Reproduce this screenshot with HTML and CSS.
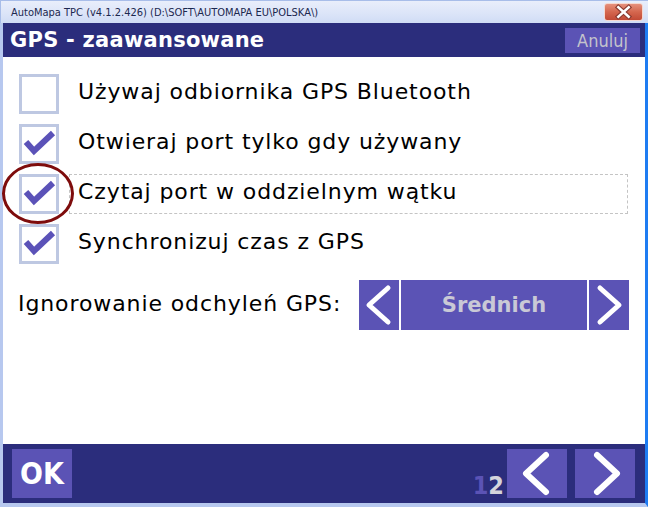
FILE: index.html
```html
<!DOCTYPE html>
<html lang="pl">
<head>
<meta charset="utf-8">
<title>AutoMapa TPC</title>
<link rel="stylesheet" href="styles.css">
</head>
<body>
<div class="win">
  <div class="titlebar">
    <span class="title">AutoMapa TPC (v4.1.2.426) (D:\SOFT\AUTOMAPA EU\POLSKA\)</span>
    <span class="close">
      <svg width="39" height="18" viewBox="0 0 39 18">
        <path d="M14 4 L25 14 M25 4 L14 14" stroke="#8a3a30" stroke-width="5" stroke-linecap="square" fill="none"/>
        <path d="M14 4 L25 14 M25 4 L14 14" stroke="#ffffff" stroke-width="2.6" stroke-linecap="square" fill="none"/>
      </svg>
    </span>
  </div>
  <div class="frame">
    <div class="hdr">
      <h1 class="hdr-title">GPS - zaawansowane</h1>
      <div class="cancel">Anuluj</div>
    </div>
    <div class="content">
      <div class="opt">
        <span class="box"></span>
        <span class="lbl">Używaj odbiornika GPS Bluetooth</span>
      </div>
      <div class="opt">
        <span class="box"><svg class="tick" width="34" height="34" viewBox="0 0 34 34"><path d="M4 15 L12 24 L31 6" stroke="#5b52b8" stroke-width="6" fill="none" stroke-linejoin="miter"/></svg></span>
        <span class="lbl">Otwieraj port tylko gdy używany</span>
      </div>
      <div class="opt focus">
        <span class="box"><svg class="tick" width="34" height="34" viewBox="0 0 34 34"><path d="M4 15 L12 24 L31 6" stroke="#5b52b8" stroke-width="6" fill="none" stroke-linejoin="miter"/></svg></span>
        <span class="lbl">Czytaj port w oddzielnym wątku</span>
        <span class="ring"></span>
      </div>
      <div class="opt">
        <span class="box"><svg class="tick" width="34" height="34" viewBox="0 0 34 34"><path d="M4 15 L12 24 L31 6" stroke="#5b52b8" stroke-width="6" fill="none" stroke-linejoin="miter"/></svg></span>
        <span class="lbl">Synchronizuj czas z GPS</span>
      </div>
      <div class="gpsrow">
        <span class="gpslbl">Ignorowanie odchyleń GPS:</span>
        <div class="stepper">
          <div class="sbtn"><svg width="40" height="50" viewBox="0 0 40 50"><path d="M29 8 L10 25 L29 42" stroke="#fff" stroke-width="5" fill="none" stroke-linecap="round" stroke-linejoin="round"/></svg></div>
          <div class="smid">Średnich</div>
          <div class="sbtn"><svg width="40" height="50" viewBox="0 0 40 50"><path d="M11 8 L30 25 L11 42" stroke="#fff" stroke-width="5" fill="none" stroke-linecap="round" stroke-linejoin="round"/></svg></div>
        </div>
      </div>
    </div>
    <div class="ftr">
      <div class="okbtn">OK</div>
      <div class="pages"><span class="pg-a">1</span><span class="pg-b">2</span></div>
      <div class="navs">
        <div class="nbtn"><svg width="60" height="49" viewBox="0 0 60 49"><path d="M39 6 L19 24.5 L39 43" stroke="#fff" stroke-width="6" fill="none" stroke-linecap="round" stroke-linejoin="round"/></svg></div>
        <div class="nbtn"><svg width="60" height="49" viewBox="0 0 60 49"><path d="M22 6 L42 24.5 L22 43" stroke="#fff" stroke-width="6" fill="none" stroke-linecap="round" stroke-linejoin="round"/></svg></div>
      </div>
    </div>
  </div>
</div>
</body>
</html>
```
FILE: styles.css
```css
html, body {
  margin: 0;
  padding: 0;
  background: #fff;
}
body {
  font-family: "DejaVu Sans", "Liberation Sans", sans-serif;
}
.win {
  width: 648px;
  height: 507px;
  display: flex;
  flex-direction: column;
  overflow: hidden;
}
.titlebar {
  height: 23px;
  flex: none;
  box-sizing: border-box;
  display: flex;
  align-items: center;
  justify-content: space-between;
  padding: 1px 5px 0 10px;
  background: linear-gradient(to bottom, #e9eefb 0%, #dbe4f8 60%, #d0dcf5 100%);
  border-top: 1px solid #a8bde9;
  border-left: 1px solid #a8bde9;
}
.title {
  font-family: "DejaVu Sans Condensed", "DejaVu Sans", sans-serif;
  font-stretch: condensed;
  font-size: 11px;
  color: #1c2850;
  white-space: nowrap;
}
.close {
  width: 39px;
  height: 18px;
  border-radius: 3px;
  border: 1px solid #f4d8d0;
  box-sizing: border-box;
  background: linear-gradient(to bottom, #e6907c 0%, #d4664e 50%, #c24a36 100%);
  display: flex;
  align-items: center;
  justify-content: center;
  margin-top: -2px;
}
.close svg { display: block; }
.frame {
  flex: 1;
  display: flex;
  flex-direction: column;
  border-left: 3px solid #b7c8ef;
  border-right: 3px solid #1e7cf2;
  border-bottom: 4px solid #b7c8ef;
  background: #fff;
  min-height: 0;
}
.hdr {
  height: 34px;
  flex: none;
  background: #2b2d7c;
  display: flex;
  align-items: center;
  justify-content: space-between;
  padding: 0 5px 0 7px;
}
.hdr-title {
  margin: 0;
  font-size: 21px;
  letter-spacing: 0.25px;
  font-weight: bold;
  color: #fff;
}
.cancel {
  width: 75px;
  height: 25px;
  margin-top: 1px;
  background: #5b53b5;
  color: #c4c4cc;
  font-family: "DejaVu Sans Condensed", "DejaVu Sans", sans-serif;
  font-stretch: condensed;
  font-size: 18px;
  display: flex;
  align-items: center;
  justify-content: center;
}
.content {
  flex: 1;
  padding: 17px 17px 0 16px;
  display: flex;
  flex-direction: column;
  gap: 10px;
}
.opt {
  display: flex;
  height: 40px;
  gap: 10px;
  position: relative;
}
.box {
  width: 40px;
  height: 40px;
  flex: none;
  box-sizing: border-box;
  border: 3px solid #bec8e2;
}
.tick { display: block; }
.lbl {
  flex: 1;
  display: flex;
  align-items: center;
  box-sizing: border-box;
  padding: 0 0 5px 8px;
  border: 1px solid transparent;
  font-size: 22px;
  letter-spacing: 0.9px;
  color: #000;
  white-space: nowrap;
}
.focus .lbl {
  border: 1px dashed #c4c4c4;
}
.ring {
  position: absolute;
  left: -17px;
  top: -11px;
  width: 72px;
  height: 61px;
  box-sizing: border-box;
  border: 3px solid #7e0c0c;
  border-radius: 50%;
}
.gpsrow {
  margin-top: 6px;
  height: 50px;
  display: flex;
  align-items: center;
  justify-content: space-between;
  margin-right: -1px;
}
.gpslbl {
  font-size: 22px;
  letter-spacing: 0.9px;
  color: #000;
  margin-left: -1px;
  padding-bottom: 3px;
  white-space: nowrap;
}
.stepper {
  display: flex;
  gap: 2px;
  height: 50px;
}
.sbtn {
  width: 40px;
  height: 50px;
  background: #5b53b5;
}
.sbtn svg, .nbtn svg { display: block; }
.smid {
  width: 186px;
  height: 50px;
  background: #5b53b5;
  color: #c9c9d6;
  font-size: 21px;
  font-weight: bold;
  display: flex;
  align-items: center;
  justify-content: center;
}
.ftr {
  height: 59px;
  flex: none;
  background: #2b2d7c;
  display: flex;
  align-items: center;
  padding: 0 10px 0 9px;
}
.okbtn {
  width: 60px;
  height: 49px;
  background: #5b53b5;
  color: #fff;
  font-family: "DejaVu Sans Condensed", "DejaVu Sans", sans-serif;
  font-stretch: condensed;
  font-size: 30px;
  font-weight: bold;
  display: flex;
  align-items: center;
  justify-content: center;
}
.pages {
  margin-left: auto;
  margin-right: 3px;
  font-family: "DejaVu Sans Condensed", "DejaVu Sans", sans-serif;
  font-stretch: condensed;
  font-size: 25px;
  font-weight: bold;
  align-self: flex-end;
  margin-bottom: 2px;
  line-height: 30px;
}
.pg-a { color: #5b53b5; }
.pg-b { color: #d4d4dc; }
.navs {
  display: flex;
  gap: 8px;
}
.nbtn {
  width: 60px;
  height: 49px;
  background: #5b53b5;
}
```
